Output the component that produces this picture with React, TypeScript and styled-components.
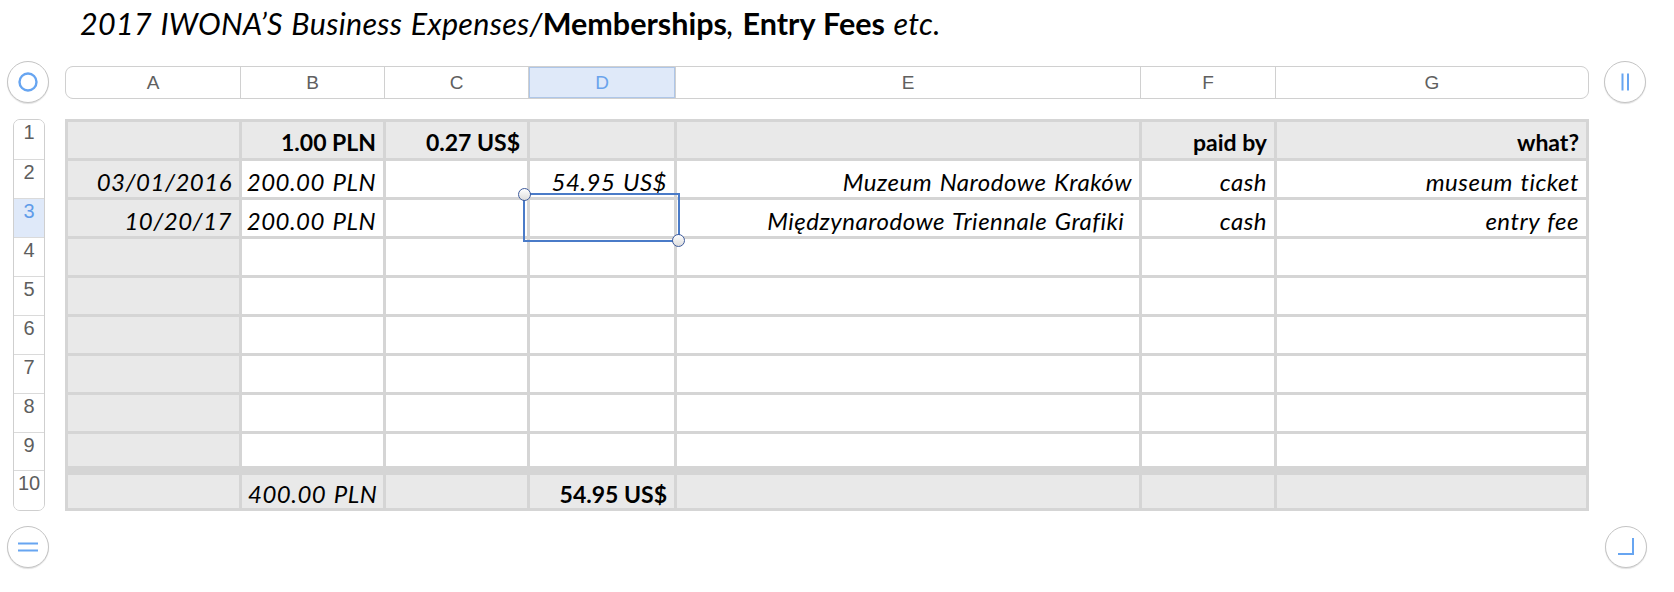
import React from 'react';
import styled, { createGlobalStyle } from 'styled-components';

const GlobalStyle = createGlobalStyle`
  html, body {
    margin: 0;
    padding: 0;
    background: #ffffff;
  }
  body {
    font-family: 'Lato', 'Open Sans', sans-serif;
  }
`;

const COLS = '171px 141px 141px 144px 462px 132px 309px';
const BLUE = '#67a5f1';

const Page = styled.div`
  width: 1674px;
  height: 592px;
  overflow: hidden;
  background: #ffffff;
`;

const Title = styled.h1`
  margin: 0;
  padding: 6px 0 0 80px;
  height: 61px;
  box-sizing: border-box;
  font-family: 'Lato', sans-serif;
  font-size: 30.5px;
  line-height: 34px;
  font-weight: 400;
  font-style: italic;
  letter-spacing: 0.3px;
  word-spacing: 1px;
  color: #000000;

  b {
    font-weight: 700;
    font-style: normal;
    letter-spacing: 0;
  }
`;

const Sheet = styled.div`
  display: grid;
  grid-template-columns: 65px 1524px 1fr;
  grid-template-rows: 58px 392px 1fr;
`;

const RoundButton = styled.div<{ $offset: number }>`
  width: 42px;
  height: 42px;
  margin-left: ${(p) => p.$offset}px;
  box-sizing: border-box;
  border-radius: 50%;
  border: 1px solid #c4c4c4;
  background: #ffffff;
  box-shadow: 0 1px 1px rgba(0, 0, 0, 0.12);
  display: flex;
  align-items: center;
  justify-content: center;
`;

const BottomButton = styled(RoundButton)`
  margin-top: 15px;
`;

const HeaderBar = styled.div`
  margin-top: 5px;
  height: 33px;
  box-sizing: border-box;
  display: grid;
  grid-template-columns: 174px 143px 143px 146px 464px 134px 1fr;
  gap: 1px;
  background: #d0d0d0;
  border: 1px solid #d0d0d0;
  border-radius: 8px;
  overflow: hidden;
`;

const ColHead = styled.div<{ $active?: boolean }>`
  display: flex;
  align-items: center;
  justify-content: center;
  background: ${(p) => (p.$active ? '#dfe9f9' : '#ffffff')};
  box-shadow: ${(p) => (p.$active ? 'inset 0 0 0 1px #aec6e8' : 'none')};
  color: ${(p) => (p.$active ? '#6aa3ec' : '#606060')};
  font-family: 'Liberation Sans', Arial, sans-serif;
  font-size: 19px;
`;

const RowNumbers = styled.div`
  margin-left: 13px;
  width: 32px;
  display: flex;
  flex-direction: column;
  box-sizing: border-box;
  border: 1px solid #cfcfcf;
  border-radius: 7px;
  overflow: hidden;
`;

const RowNum = styled.div<{ $h: number; $active?: boolean }>`
  height: ${(p) => p.$h}px;
  box-sizing: border-box;
  border-top: 1px solid #dadada;
  text-align: center;
  line-height: 24px;
  font-family: 'Liberation Sans', Arial, sans-serif;
  font-size: 20px;
  background: ${(p) => (p.$active ? '#dfe9f9' : '#ffffff')};
  color: ${(p) => (p.$active ? '#5f9ce9' : '#5e5e5e')};

  &:first-child {
    border-top: none;
  }
`;

const TableWrap = styled.div`
  position: relative;
`;

const Table = styled.div`
  height: 392px;
  box-sizing: border-box;
  padding: 3px;
  background: #d5d5d5;
  display: flex;
  flex-direction: column;
  gap: 3px;
`;

const Row = styled.div<{ $h: number; $footer?: boolean }>`
  height: ${(p) => p.$h}px;
  margin-top: ${(p) => (p.$footer ? 6 : 0)}px;
  display: grid;
  grid-template-columns: ${COLS};
  gap: 3px;
`;

const Cell = styled.div<{ $gray?: boolean; $bold?: boolean; $italic?: boolean; $left?: boolean }>`
  background: ${(p) => (p.$gray ? '#e9e9e9' : '#ffffff')};
  display: flex;
  align-items: center;
  justify-content: ${(p) => (p.$left ? 'flex-start' : 'flex-end')};
  padding: 4px 7px 0 6px;
  white-space: pre;
  overflow: hidden;
  font-family: 'Lato', sans-serif;
  font-size: ${(p) => (p.$bold ? 23 : 24)}px;
  letter-spacing: ${(p) => (p.$italic ? 0.5 : 0)}px;
  word-spacing: ${(p) => (p.$italic ? 1.5 : 0)}px;
  font-weight: ${(p) => (p.$bold ? 700 : 400)};
  font-style: ${(p) => (p.$italic ? 'italic' : 'normal')};
  color: #000000;
`;

const Selection = styled.div`
  position: absolute;
  left: 458px;
  top: 74px;
  width: 157px;
  height: 49px;
  box-sizing: border-box;
  border: 2px solid #4a7bc8;
  pointer-events: none;
`;

const Handle = styled.span<{ $corner: 'tl' | 'br' }>`
  position: absolute;
  width: 13px;
  height: 13px;
  box-sizing: border-box;
  border-radius: 50%;
  border: 1.5px solid #3e5b9c;
  background: linear-gradient(#ffffff, #dcdcdc);
  ${(p) => (p.$corner === 'tl' ? 'left: -7px; top: -7px;' : 'right: -7px; bottom: -7px;')}
`;

type CellData = { text?: string; bold?: boolean; italic?: boolean; left?: boolean };

const body = (a: string, b: string, d: string, e: string, f: string, g: string): CellData[] => [
  { text: a, italic: true },
  { text: b, italic: true },
  {},
  { text: d, italic: true },
  { text: e, italic: true },
  { text: f, italic: true },
  { text: g, italic: true },
];

const rows: { h: number; cells: CellData[]; gray?: boolean; footer?: boolean }[] = [
  {
    h: 36,
    gray: true,
    cells: [
      {},
      { text: '1.00 PLN', bold: true },
      { text: '0.27 US$', bold: true },
      {},
      {},
      { text: 'paid by', bold: true },
      { text: 'what?', bold: true },
    ],
  },
  { h: 36, cells: body('03/01/2016', '200.00 PLN', '54.95 US$', 'Muzeum Narodowe Kraków', 'cash', 'museum ticket') },
  { h: 36, cells: body('10/20/17', '200.00 PLN', '', 'Międzynarodowe Triennale Grafiki ', 'cash', 'entry fee') },
  { h: 36, cells: [] },
  { h: 36, cells: [] },
  { h: 36, cells: [] },
  { h: 36, cells: [] },
  { h: 36, cells: [] },
  { h: 32, cells: [] },
  {
    h: 33,
    gray: true,
    footer: true,
    cells: [
      {},
      { text: '400.00 PLN', italic: true, left: true },
      {},
      { text: '54.95 US$', bold: true },
      {},
      {},
      {},
    ],
  },
];

const rowNumHeights = [39, 39, 39, 39, 39, 39, 39, 39, 38, 40];

const App: React.FC = () => {
  return (
    <Page>
      <GlobalStyle />
      <Title>
        2017 IWONA’S Business Expenses/<b>Memberships</b>, <b>Entry Fees</b> etc.
      </Title>

      <Sheet>
        <RoundButton $offset={7}>
          <svg width="22" height="22" viewBox="0 0 22 22">
            <circle cx="11" cy="11" r="8.5" fill="none" stroke={BLUE} strokeWidth="2.4" />
          </svg>
        </RoundButton>

        <HeaderBar>
          {['A', 'B', 'C', 'D', 'E', 'F', 'G'].map((c) => (
            <ColHead key={c} $active={c === 'D'}>
              {c}
            </ColHead>
          ))}
        </HeaderBar>

        <RoundButton $offset={15}>
          <svg width="20" height="20" viewBox="0 0 20 20">
            <rect x="6.5" y="1.5" width="2" height="17" fill={BLUE} />
            <rect x="12" y="1.5" width="2" height="17" fill={BLUE} />
          </svg>
        </RoundButton>

        <RowNumbers>
          {rowNumHeights.map((h, i) => (
            <RowNum key={i} $h={h} $active={i === 2}>
              {i + 1}
            </RowNum>
          ))}
        </RowNumbers>

        <TableWrap>
          <Table>
            {rows.map((r, ri) => (
              <Row key={ri} $h={r.h} $footer={r.footer}>
                {Array.from({ length: 7 }).map((_, ci) => {
                  const c = r.cells[ci] || {};
                  return (
                    <Cell
                      key={ci}
                      $gray={r.gray || ci === 0}
                      $bold={c.bold}
                      $italic={c.italic}
                      $left={c.left}
                    >
                      {c.text}
                    </Cell>
                  );
                })}
              </Row>
            ))}
          </Table>
          <Selection>
            <Handle $corner="tl" />
            <Handle $corner="br" />
          </Selection>
        </TableWrap>

        <div />

        <BottomButton $offset={7}>
          <svg width="24" height="12" viewBox="0 0 24 12">
            <rect x="2" y="1.5" width="20" height="2" fill={BLUE} />
            <rect x="2" y="8.5" width="20" height="2" fill={BLUE} />
          </svg>
        </BottomButton>
        <div />
        <BottomButton $offset={16}>
          <svg width="20" height="20" viewBox="0 0 20 20">
            <path d="M2 17 H17 V1" fill="none" stroke={BLUE} strokeWidth="2" />
          </svg>
        </BottomButton>
      </Sheet>
    </Page>
  );
};

export default App;
